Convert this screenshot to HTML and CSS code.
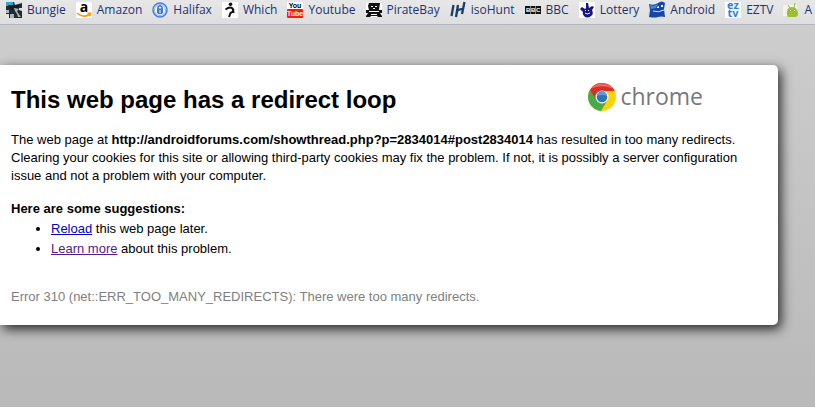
FILE: index.html
```html
<!DOCTYPE html>
<html lang="en">
<head>
  <meta charset="UTF-8" />
  <title>This web page has a redirect loop</title>
  <meta name="viewport" content="width=device-width, initial-scale=1" />
  <link rel="stylesheet" href="styles.css">
</head>
<body>
  <nav class="bookmarks">
    <a href="#">
      <svg viewBox="0 0 16 16"><path fill="#222b33" d="M0 0h16v16H0z"/><path fill="#dfdfdf" d="M8 0h8v1L9 3zM13 6h3v3l-3-1z"/><path fill="#36a3d6" d="M0 0h7v4H0z"/><path fill="#a9b4bb" d="M0 8h3v3H0zM4 12h4v4H4zM8 6l5 1-2 2 1 2 3 4h-3l-1-3-2-3z"/><path fill="#e4e4e4" d="M0 12h3v4H0z"/><path fill="#14191e" d="M2 3l12 0-3 3H7v3L4 6z"/></svg>
      Bungie
    </a>
    <a href="#">
      <svg viewBox="0 0 16 16"><rect width="16" height="16" rx="2" fill="#fff"/><text class="amazon" x="8" y="10" text-anchor="middle">a</text><path fill="none" stroke="#f90" stroke-width="1.600" d="M1 11Q7 16.500 13 12.500M11.500 11.300h3l-1 3"/></svg>
      Amazon
    </a>
    <a href="#">
      <svg viewBox="0 0 16 16"><circle cx="8" cy="8" r="7" fill="#dce9fb" stroke="#4b7ed8" stroke-width="1.500"/><circle cx="8" cy="8" r="5.500" fill="#fff" stroke="#8fb3ee"/><path fill="none" stroke="#2f6cd6" stroke-width="1.500" d="M6 7V5q2-2.500 4 0v2"/><path fill="#3a76dc" d="M5 6.500h6V11q-3 2.500-6 0z"/><path fill="#fff" d="M7.500 8h1v3h-1z"/></svg>
      Halifax
    </a>
    <a href="#">
      <svg viewBox="0 0 16 16"><path fill="#fff" d="M0 0h16v16H0z"/><circle cx="8.500" cy="2.300" r="1.800" fill="#111"/><path fill="none" stroke="#111" stroke-width="2" d="M3.500 7.500Q8 4 10.500 6.500T8.500 11L7 15"/><path fill="none" stroke="#111" stroke-width="1.500" d="M10.500 7l1.500 4"/></svg>
      Which
    </a>
    <a href="#">
      <svg viewBox="0 0 16 16"><path fill="#fff" d="M0 0h16v8H0z"/><rect y="7" width="16" height="9" rx="1" fill="#f21d12"/><text class="tiny" x="8" y="6" text-anchor="middle">You</text><text class="tiny light" x="8" y="14" text-anchor="middle">Tube</text></svg>
      Youtube
    </a>
    <a href="#">
      <svg viewBox="0 0 16 16"><path fill="#fff" d="M0 1h16v14H0z"/><path fill="#111" d="M3 1h11l-1 7h3v3h-2l2 3v1h-4l-1-1H5l-1 1H0v-1l2-3H0V8h3l-1-4z"/><path fill="#fff" d="M5 4h2v1H5zM9 4h2v1H9zM7 6h2v1H7zM3 9h10v1H3zM5 12h6v1H5z"/></svg>
      PirateBay
    </a>
    <a href="#">
      <svg viewBox="0 0 16 16"><path fill="none" stroke="#143f6b" stroke-width="2.300" d="M3.500 3L1.500 14M8 3L6 15M6.500 9.500Q10 6 13 7.500M14.500 0L12 12"/></svg>
      isoHunt
    </a>
    <a href="#">
      <svg viewBox="0 0 16 16"><path fill="#fff" d="M0 4h16v8H0z"/><path fill="#111" d="M0 4h5v8H0zM5.500 4h5v8h-5zM11 4h5v8h-5z"/><g class="bbc"><text x="1" y="10">B</text><text x="6" y="10">B</text><text x="11" y="10">C</text></g></svg>
      BBC
    </a>
    <a href="#">
      <svg viewBox="0 0 16 16"><path fill="#fff" d="M0 0h16v16H0z"/><path fill="#15158f" d="M7 1h2l1 5 3-2 2 1-2 3q2 4-1 6-4 3-7 0-2-2-1-4L1 7l2-2 3 2 1-1z"/><path fill="none" stroke="#fff" d="M6 11q2 2 5 0"/><path fill="#fff" d="M6 8h1v1H6zM9 8h1v1H9z"/></svg>
      Lottery
    </a>
    <a href="#">
      <svg viewBox="0 0 16 16"><path fill="#1746a8" d="M0 2q5 2 9-1t7 0l-1 6 1 8q-4-1-7 0t-9 0l1-7z"/><path fill="#4a83dc" d="M1 3q4 2 8-1L7 6 2 7z"/><path fill="#fff" d="M8 5l2-1v2H8zM12 3h2v2h-2z"/><path fill="none" stroke="#dce8fa" d="M4 9q5 2 11-1"/></svg>
      Android
    </a>
    <a href="#">
      <svg viewBox="0 0 16 16"><path fill="#fff" d="M0 0h16v16H0z"/><text class="eztv" x="8" y="7" text-anchor="middle">ez</text><text class="eztv" x="8" y="15" text-anchor="middle">tv</text></svg>
      EZTV
    </a>
    <a href="#">
      <svg viewBox="0 0 16 16"><path fill="#f2f4ea" d="M0 3h14v11H0z"/><path fill="#9abf2f" d="M4 13q-1-8 5-8t6 8l-2 2H5z"/><path fill="none" stroke="#9abf2f" d="M5 3l2 3M12 1l-1 5"/><path fill="#fff" d="M7 8h1v1H7zM11 8h1v1h-1z"/></svg>
      A
    </a>
  </nav>
  <main>
    <div class="card">
      <div class="card-head">
        <h1>This web page has a redirect loop</h1>
        <div class="logo">
          <svg viewBox="0 0 28 28">
            <circle cx="14" cy="14" r="14" fill="#fcd20a"/>
            <path fill="#45ac49" d="M14 14L1.900 7A14 14 0 0 0 13 28l6.600-11z"/>
            <path fill="#de2c28" d="M1.900 7A14 14 0 0 1 26.700 8H14l-5.500 9z"/>
            <path fill="#ef6a5c" d="M3.500 5.500A13.500 13.500 0 0 1 24.500 5.500Q14 1 3.500 5.500z"/>
            <circle cx="14" cy="14" r="6.500" fill="#fff"/>
            <circle cx="14" cy="14" r="5.300" fill="#2f74ba"/>
            <path fill="#5e9bd4" d="M9 13a5 5 0 0 1 10 0q-5-2-10 0z"/>
          </svg>
          chrome
        </div>
      </div>
      <p>The web page at <strong>http://androidforums.com/showthread.php?p=2834014#post2834014</strong> has resulted in too many redirects. Clearing your cookies for this site or allowing third-party cookies may fix the problem. If not, it is possibly a server configuration issue and not a problem with your computer.</p>
      <h2>Here are some suggestions:</h2>
      <ul>
        <li><a href="#">Reload</a> this web page later.</li>
        <li><a class="visited" href="#">Learn more</a> about this problem.</li>
      </ul>
      <p class="error">Error 310 (net::ERR_TOO_MANY_REDIRECTS): There were too many redirects.</p>
    </div>
  </main>
</body>
</html>
```
FILE: styles.css
```css
* {
  box-sizing: border-box;
}
body {
  margin: 0;
  min-height: 100vh;
  padding-bottom: 12px;
  display: flex;
  flex-direction: column;
  background: #fff;
  color: #000;
  font: 13px/18px "Liberation Sans", Arial, sans-serif;
}
.bookmarks {
  display: flex;
  gap: 10px;
  height: 25px;
  padding: 2px 0 0 6px;
  background: linear-gradient(#e7e7e7, #dedede);
  border-bottom: 1px solid #b4b6bf;
  overflow: hidden;
}
.bookmarks a {
  display: flex;
  flex: none;
  gap: 5px;
  font: 12px/16px "Open Sans", "Noto Sans", sans-serif;
  color: #1e3177;
  text-decoration: none;
  white-space: nowrap;
}
.bookmarks svg {
  width: 16px;
  height: 16px;
  overflow: visible;
}
.amazon {
  font: bold 14px "Open Sans", sans-serif;
}
.tiny {
  font: bold 7px "Liberation Sans", Arial, sans-serif;
}
.light {
  fill: #fff;
}
.bbc {
  font: bold 6px "Liberation Sans", Arial, sans-serif;
  fill: #fff;
}
.eztv {
  font: bold 11px "Open Sans", sans-serif;
  fill: #2f7fe0;
}
main {
  flex: 1;
  padding: 40px 37px 40px 0;
  background: linear-gradient(#cdcdcd, #b9b9b9);
}
.card {
  padding: 18px 32px 19px 11px;
  background: #fff;
  border-radius: 0 5px 5px 0;
  box-shadow: 3px 4px 12px #000c;
}
.card-head {
  display: flex;
  justify-content: space-between;
  padding-right: 43px;
  margin-bottom: 14px;
}
h1 {
  margin: 0;
  font-size: 24px;
  line-height: 34px;
}
.logo {
  display: flex;
  gap: 4px;
  height: 28px;
  font: 23px/26px "Open Sans", sans-serif;
  color: #77787b;
}
.logo svg {
  width: 28px;
  height: 28px;
}
p {
  margin: 0;
}
h2 {
  margin: 15px 0 0;
  font-size: 13px;
  line-height: 18px;
}
ul {
  margin: 1px 0 0;
  padding-left: 40px;
  line-height: 20px;
}
li a {
  color: #00c;
}
li .visited {
  color: #551a8b;
}
.error {
  margin-top: 29px;
  color: #808080;
}
```
